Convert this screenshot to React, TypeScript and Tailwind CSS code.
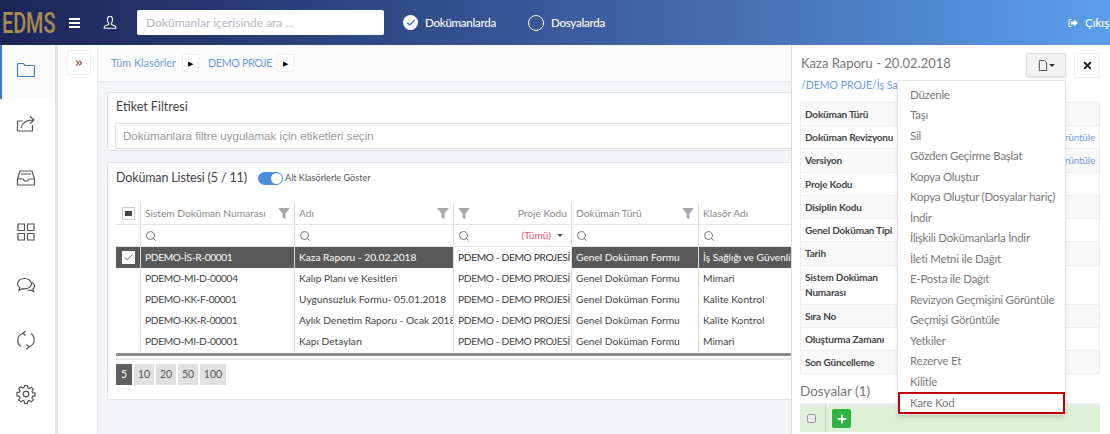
import { ChevronsRight, Search, Check, X, Plus } from "lucide-react";

const rows = [
  ["PDEMO-İS-R-00001", "Kaza Raporu - 20.02.2018", "PDEMO - DEMO PROJESİ", "Genel Doküman Formu", "İş Sağlığı ve Güvenliği"],
  ["PDEMO-MI-D-00004", "Kalıp Planı ve Kesitleri", "PDEMO - DEMO PROJESİ", "Genel Doküman Formu", "Mimari"],
  ["PDEMO-KK-F-00001", "Uygunsuzluk Formu- 05.01.2018", "PDEMO - DEMO PROJESİ", "Genel Doküman Formu", "Kalite Kontrol"],
  ["PDEMO-KK-R-00001", "Aylık Denetim Raporu - Ocak 2018", "PDEMO - DEMO PROJESİ", "Genel Doküman Formu", "Kalite Kontrol"],
  ["PDEMO-MI-D-00001", "Kapı Detayları", "PDEMO - DEMO PROJESİ", "Genel Doküman Formu", "Mimari"],
];

const menuItems = [
  "Düzenle",
  "Taşı",
  "Sil",
  "Gözden Geçirme Başlat",
  "Kopya Oluştur",
  "Kopya Oluştur (Dosyalar hariç)",
  "İndir",
  "İlişkili Dokümanlarla İndir",
  "İleti Metni ile Dağıt",
  "E-Posta ile Dağıt",
  "Revizyon Geçmişini Görüntüle",
  "Geçmişi Görüntüle",
  "Yetkiler",
  "Rezerve Et",
  "Kilitle",
];

const details: [string, string, string][] = [
  ["Doküman Türü", "h-[23px]", ""],
  ["Doküman Revizyonu", "h-[23px]", "rüntüle"],
  ["Versiyon", "h-[24px]", "rüntüle"],
  ["Proje Kodu", "h-[23px]", ""],
  ["Disiplin Kodu", "h-[23px]", ""],
  ["Genel Doküman Tipi", "h-[23px]", ""],
  ["Tarih", "h-[24px]", ""],
  ["Sistem Doküman Numarası", "h-[39px]", ""],
  ["Sıra No", "h-[23px]", ""],
  ["Oluşturma Zamanı", "h-[23px]", ""],
  ["Son Güncelleme", "h-[23px]", ""],
];

const colWidths = ["w-[25px]", "w-[154px]", "w-[159px]", "w-[118px]", "w-[127px]", "w-[120px]"];

function SideIcon({ children, active }: { children: React.ReactNode; active?: boolean }) {
  return (
    <div
      className={`flex h-[54px] w-full items-center justify-center pb-[4px] ${
        active ? "border-l-2 border-[#3a7fc4] bg-[#fafafa] pr-[5px]" : "pr-[3px]"
      }`}
    >
      <svg
        viewBox="0 0 20 20"
        className={`h-[20px] w-[20px] fill-none stroke-[1.2] ${active ? "stroke-[#3a7fc4]" : "stroke-[#555]"}`}
      >
        {children}
      </svg>
    </div>
  );
}

function Funnel() {
  return (
    <svg viewBox="0 0 12 11" className="h-[11px] w-[12px] shrink-0 fill-[#a8a8a8]">
      <path d="M0 0h12L7.500 5.500V11l-3-1.500v-4z" />
    </svg>
  );
}

function HeaderCell({ label, width, right }: { label: string; width: string; right?: boolean }) {
  return (
    <div className={`flex h-[21px] shrink-0 items-center border-r border-[#dcdcdc] px-[4px] ${width}`}>
      {right && <Funnel />}
      <span className={`flex-1 truncate text-[10.2px] text-[#8a8a8a] ${right ? "text-right" : ""}`}>{label}</span>
      {!right && <Funnel />}
    </div>
  );
}

export default function App() {
  return (
    <div className="flex h-[434px] w-[1110px] flex-col overflow-hidden bg-white font-['Lato',sans-serif]">
      <header className="flex h-[45px] shrink-0 items-center bg-gradient-to-r from-[#1c2558] via-[#3a5a9c] to-[#5c9eea] text-white">
        <div className="flex w-[60px] items-center whitespace-nowrap">
          <span className="ml-[2px] origin-left scale-x-[0.66] font-['Roboto',sans-serif] text-[30px] font-medium leading-none text-[#a98c4f]">EDMS</span>
        </div>
        <div className="ml-[9px] flex w-[11px] flex-col gap-[2px]">
          <div className="h-[2px] bg-white" />
          <div className="h-[2px] bg-white" />
          <div className="h-[2px] bg-white" />
        </div>
        <svg viewBox="0 0 14 14" className="ml-[23px] h-[14px] w-[14px] fill-none stroke-white stroke-[1.1]">
          <path d="M4.6 4.2a2.5 3.2 0 1 1 4.8 0c0 1.5-.7 2.6-1.1 3.1v1.2l3.7 1.6c.5.2.8.6.8 1.2v.9H1.2v-.9c0-.6.3-1 .8-1.2l3.7-1.6V7.3c-.4-.5-1.1-1.6-1.1-3.1z" />
        </svg>
        <div className="ml-[20px] flex h-[25px] w-[247px] items-center rounded-[2px] bg-white pl-[9px] text-[12px] text-[#b4b6bf]">
          Dokümanlar içerisinde ara ...
        </div>
        <div className="ml-[19px] flex h-[15px] w-[15px] items-center justify-center rounded-full bg-white">
          <Check className="h-[10px] w-[10px] text-[#3d7fd6]" strokeWidth={3.5} />
        </div>
        <span className="ml-[7px] w-[72px] whitespace-nowrap text-[11.5px] font-medium tracking-[-0.25px]">Dokümanlarda</span>
        <div className="ml-[31px] h-[16px] w-[16px] rounded-full border border-white" />
        <span className="ml-[7px] text-[11.5px] font-medium tracking-[-0.25px]">Dosyalarda</span>
        <div className="ml-auto flex w-[42px] shrink-0 items-center gap-[7px] overflow-hidden">
          <svg viewBox="0 0 10 10" className="h-[10px] w-[10px] shrink-0 fill-white">
            <path d="M3.500 1H1.500A1 1 0 0 0 .5 2v6a1 1 0 0 0 1 1h2V8H1.500V2h2zM6 1.500 10 5 6 8.500V6.500H3v-3h3z" />
          </svg>
          <span className="text-[11.5px] font-medium">Çıkış</span>
        </div>
      </header>

      <div className="flex min-h-0 flex-1">
        <aside className="flex w-[58px] shrink-0 flex-col border-r-[3px] border-[#e2e2e2]">
          <SideIcon active>
            <path d="M1.5 4.5a1 1 0 0 1 1-1h5l1.5 2h8.5a1 1 0 0 1 1 1v9a1 1 0 0 1-1 1h-15a1 1 0 0 1-1-1z" />
          </SideIcon>
          <SideIcon>
            <path d="M16.500 11v6h-15V7h5M5 14c1-5 5-8 12-8M14 2.500 18 6l-4 3.500" />
          </SideIcon>
          <SideIcon>
            <path d="M1.500 11 4 3h12l2.500 8v6h-17zM1.500 11H7l1.500 2h3L13 11h5.500M5 6h10" />
          </SideIcon>
          <SideIcon>
            <path d="M2 2h6.500v6.500H2zM11.500 2H18v6.500h-6.500zM2 11.500h6.500V18H2zM11.500 11.500H18V18h-6.500z" />
          </SideIcon>
          <SideIcon>
            <path d="M8.500 2.500c3.800 0 7 2.300 7 5.200s-3.200 5.200-7 5.200c-.8 0-1.500-.1-2.200-.3L3 14.500l.8-3C2.400 10.600 1.500 9.200 1.500 7.700c0-2.900 3.200-5.200 7-5.200zM16.200 6.500c1.400.8 2.300 2 2.300 3.500 0 1.200-.6 2.200-1.600 3l.6 2.500-2.800-1.500c-.9.300-2 .3-3 0" />
          </SideIcon>
          <SideIcon>
            <path d="M5 16.500A7.500 7.500 0 0 1 7 3.200M15 3.500a7.500 7.500 0 0 1-2 13.300M9.500 1 7 3.200l2.500 2.300M10.500 19l2.500-2.200-2.500-2.300" />
          </SideIcon>
          <SideIcon>
            <circle cx="10" cy="10" r="2.800" />
            <path d="M8.600 1.500h2.800l.4 2.300 1.500.7 2-1.300 2 2-1.300 2 .6 1.500 2.400.4v2.800l-2.400.4-.6 1.500 1.300 2-2 2-2-1.300-1.500.6-.4 2.400H8.600l-.4-2.400-1.500-.6-2 1.300-2-2 1.300-2-.6-1.500-2.400-.4V8.600l2.400-.4.600-1.500-1.300-2 2-2 2 1.300 1.500-.7z" />
          </SideIcon>
        </aside>

        <div className="w-[40px] shrink-0 border-r border-[#ececec] pl-[9px] pt-[5px]">
          <div className="flex h-[25px] w-[24px] items-center justify-center rounded-[2px] border border-[#eee] bg-white">
            <ChevronsRight className="h-[10px] w-[10px] text-[#8a5a3c]" strokeWidth={3} />
          </div>
        </div>

        <main className="min-w-0 flex-1 overflow-hidden bg-[#f3f5f9]">
          <div className="flex h-[38px] items-center border-b-2 border-[#e8ebf0] bg-[#fbfbfc] pl-[13px] text-[10.8px] text-[#6f9be8]">
            <span className="w-[67px] whitespace-nowrap">Tüm Klasörler</span>
            <span className="ml-[4px] flex h-[18px] w-[17px] items-center justify-center rounded-[2px] border border-[#eee] bg-white text-[7px] text-black">▶</span>
            <span className="ml-[9px] w-[63px] whitespace-nowrap tracking-[-0.4px]">DEMO PROJE</span>
            <span className="ml-[6px] flex h-[18px] w-[17px] items-center justify-center rounded-[2px] border border-[#eee] bg-white text-[7px] text-black">▶</span>
          </div>

          <div className="pl-[9px] pt-[9px]">
            <section className="h-[59px] w-[800px] rounded-[3px] border border-[#dde3eb] bg-white pl-[7px] pt-[5px]">
              <div className="ml-[1px] text-[12.5px] leading-[17px] text-[#444]">Etiket Filtresi</div>
              <div className="mt-[8px] flex h-[26px] items-center rounded-[2px] border border-[#ddd] pl-[7px] font-['Liberation_Sans',sans-serif] text-[11.6px] text-[#9a9a9a]">
                Dokümanlara filtre uygulamak için etiketleri seçin
              </div>
            </section>

            <section className="mt-[11px] h-[238px] w-[800px] rounded-[3px] border border-[#dde3eb] bg-white pl-[8px] pt-[4px]">
              <div className="flex h-[22px] items-center">
                <span className="w-[131px] whitespace-nowrap text-[12.5px] tracking-[-0.15px] text-[#444]">Doküman Listesi (5 / 11)</span>
                <div className="ml-[11px] flex h-[13px] w-[25px] items-center justify-end rounded-full bg-[#4a8ee0] pr-[1px]">
                  <div className="h-[11px] w-[11px] rounded-full bg-white" />
                </div>
                <span className="ml-[2px] text-[9.1px] text-[#555]">Alt Klasörlerle Göster</span>
              </div>

              <div className="mt-[14px] w-[703px]">
                <div className="flex border-b border-[#e4e4e4]">
                  <div className={`flex h-[21px] shrink-0 items-center justify-center border-r border-[#dcdcdc] ${colWidths[0]}`}>
                    <div className="flex h-[13px] w-[13px] items-center justify-center border border-[#ccc] bg-white">
                      <div className="h-[5px] w-[7px] bg-[#444]" />
                    </div>
                  </div>
                  <HeaderCell label="Sistem Doküman Numarası" width={colWidths[1]} />
                  <HeaderCell label="Adı" width={colWidths[2]} />
                  <HeaderCell label="Proje Kodu" width={colWidths[3]} right />
                  <HeaderCell label="Doküman Türü" width={colWidths[4]} />
                  <HeaderCell label="Klasör Adı" width={colWidths[5]} />
                </div>

                <div className="flex border-b border-[#e4e4e4]">
                  <div className={`h-[21px] shrink-0 border-r border-[#dcdcdc] ${colWidths[0]}`} />
                  {colWidths.slice(1).map((w, i) => (
                    <div key={w + i} className={`flex h-[21px] shrink-0 items-center border-r border-[#dcdcdc] px-[4px] ${w}`}>
                      <Search className="h-[12px] w-[12px] text-[#777]" />
                      {i === 2 && (
                        <span className="ml-auto mr-[4px] flex items-center gap-[6px] text-[10px] text-[#f0506e]">
                          (Tümü)
                          <span className="h-0 w-0 border-x-[3px] border-t-[3px] border-x-transparent border-t-[#555]" />
                        </span>
                      )}
                    </div>
                  ))}
                </div>

                {rows.map((row, r) => (
                  <div key={row[0]} className={`flex ${r === 0 ? "bg-[#595959] text-white" : "text-[#444]"}`}>
                    <div className={`flex h-[21px] shrink-0 items-center justify-center border-r border-[#dcdcdc] ${colWidths[0]}`}>
                      {r === 0 && (
                        <div className="flex h-[13px] w-[13px] items-center justify-center bg-white">
                          <Check className="h-[11px] w-[11px] text-[#555]" strokeWidth={2} />
                        </div>
                      )}
                    </div>
                    {row.map((cell, c) => (
                      <div
                        key={c}
                        className={`flex h-[21px] shrink-0 items-center overflow-hidden whitespace-nowrap border-r border-[#dcdcdc] pl-[4px] text-[10.2px] ${colWidths[c + 1]} ${
                          c === 0 || c === 2 ? "tracking-[-0.35px]" : ""
                        } ${r === 0 && c === 2 ? "bg-white text-[#333]" : ""}`}
                      >
                        {cell}
                      </div>
                    ))}
                  </div>
                ))}

                <div className="mt-[1px] h-[3px] bg-[#8a8a8a]" />
                <div className="mt-[2px] h-[2px] bg-[#e8e8e8]" />
              </div>

              <div className="mt-[4px] flex gap-[2px] text-[10.5px] text-[#555]">
                <span className="flex h-[21px] w-[16px] items-center justify-center bg-[#5f5f5f] text-white">5</span>
                <span className="flex h-[21px] w-[20px] items-center justify-center bg-[#e0e0e0]">10</span>
                <span className="flex h-[21px] w-[20px] items-center justify-center bg-[#e0e0e0]">20</span>
                <span className="flex h-[21px] w-[20px] items-center justify-center bg-[#e0e0e0]">50</span>
                <span className="flex h-[21px] w-[26px] items-center justify-center bg-[#e0e0e0]">100</span>
              </div>
            </section>
          </div>
        </main>

        <aside className="relative w-[319px] shrink-0 border-l border-[#ddd] bg-white pl-[8px] pr-[10px]">
          <div className="flex h-[33px] items-start pt-[8px]">
            <span className="ml-[1px] mt-[1px] text-[13px] text-[#777]">Kaza Raporu - 20.02.2018</span>
            <div className="ml-auto flex h-[24px] w-[40px] items-center justify-center gap-[1px] rounded-[2px] border border-[#ddd] bg-[#f2f2f2] shadow-sm">
              <svg viewBox="0 0 10 12" className="h-[11px] w-[10px] fill-none stroke-[#444]">
                <path d="M1 .5h5.500L9 3v8.500H1z" />
              </svg>
              <span className="h-0 w-0 border-x-[3px] border-t-[3px] border-x-transparent border-t-[#333]" />
            </div>
            <div className="ml-[8px] flex h-[25px] w-[26px] items-center justify-center rounded-[2px] border border-[#eee]">
              <X className="h-[11px] w-[11px] text-[#222]" strokeWidth={4} />
            </div>
          </div>
          <div className="ml-[1px] h-[21px] text-[10.5px] leading-[14px] text-[#6f9be8]">/DEMO PROJE/İş Sağlığı</div>
          <div className="mt-[3px] border-x border-t border-[#eee]">
            {details.map(([label, h, value], i) => (
              <div
                key={label}
                className={`flex items-center justify-between border-b border-[#eee] px-[4px] text-[10px] font-bold tracking-[-0.2px] text-[#444] ${h} ${
                  i % 2 === 0 ? "bg-[#f9f9f9]" : ""
                }`}
              >
                <span className="w-[90px] whitespace-pre leading-[15px]">
                  {label === "Sistem Doküman Numarası" ? "Sistem Doküman\nNumarası" : label}
                </span>
                {value && <span className="text-[10px] font-normal text-[#6f9be8]">{value}</span>}
              </div>
            ))}
          </div>
          <div className="mt-[6px] text-[13.5px] leading-[22px] text-[#777]">Dosyalar (1)</div>
          <div className="mt-[1px] h-[2px] bg-[#eee]" />
          <div className="flex h-[27px] items-center bg-[#dff0d8]">
            <div className="ml-[7px] h-[9px] w-[9px] rounded-[2px] border border-[#999] bg-[#eee]" />
            <div className="ml-[9px] h-full border-r border-[#ccc]" />
            <div className="ml-[6px] flex h-[19px] w-[19px] items-center justify-center rounded-[2px] bg-[#2fb344]">
              <Plus className="h-[12px] w-[12px] text-white" strokeWidth={4} />
            </div>
          </div>

          <div className="absolute left-[105px] top-[35px] w-[169px] rounded-[2px] border border-[#e4e4e4] bg-white pt-[3px] text-[11.5px] tracking-[-0.25px] text-[#7a7a7a] shadow-md">
            {menuItems.map((item) => (
              <div key={item} className="flex h-[20.5px] items-center whitespace-nowrap pl-[12px]">
                {item}
              </div>
            ))}
            <div className="flex h-[22px] items-center border-2 border-[#c00000] pl-[10px]">Kare Kod</div>
          </div>
        </aside>
      </div>
    </div>
  );
}
